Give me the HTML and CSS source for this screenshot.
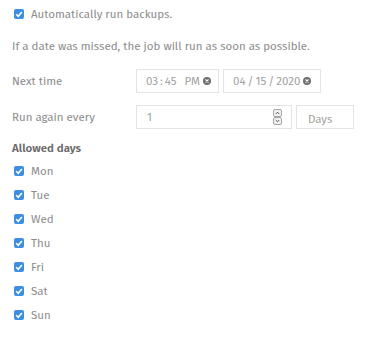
FILE: index.html
```html
<!DOCTYPE html>
<html>
<head>
<meta charset="utf-8">
<link rel="stylesheet" href="styles.css">
</head>
<body>
<div class="page">
  <label class="check top">
    <span class="box"><svg viewBox="0 0 10 10" width="10" height="10"><path d="M2.2 5.2 L4.2 7.2 L7.9 2.9" fill="none" stroke="#fff" stroke-width="1.6"/></svg></span>
    <span>Automatically run backups.</span>
  </label>
  <p class="note">If a date was missed, the job will run as soon as possible.</p>
  <div class="grid">
    <div class="lbl">Next time</div>
    <div class="fields">
      <div class="input time"><span>03</span><span class="sep">:</span><span>45</span><span class="ampm">PM</span>
        <svg class="clear" viewBox="0 0 8 8" width="8" height="8"><circle cx="4" cy="4" r="4" fill="#6e6e6e"/><path d="M2.5 2.5 L5.5 5.5 M5.5 2.5 L2.5 5.5" stroke="#fff" stroke-width="1.1"/></svg></div>
      <div class="input date"><span>04</span><span class="sep2">/</span><span>15</span><span class="sep2">/</span><span>2020</span>
        <svg class="clear" viewBox="0 0 8 8" width="8" height="8"><circle cx="4" cy="4" r="4" fill="#6e6e6e"/><path d="M2.5 2.5 L5.5 5.5 M5.5 2.5 L2.5 5.5" stroke="#fff" stroke-width="1.1"/></svg></div>
    </div>
    <div class="lbl">Run again every</div>
    <div class="fields">
      <div class="input num"><span class="val">1</span>
        <span class="spin"><svg viewBox="0 0 9 16" width="9" height="16"><rect x="0.5" y="0.5" width="8" height="7" rx="1.5" fill="#f2f2f2" stroke="#a5a5a5"/><rect x="0.5" y="8.5" width="8" height="7" rx="1.5" fill="#f2f2f2" stroke="#a5a5a5"/><path d="M2.7 5 L4.5 3.2 L6.3 5" fill="none" stroke="#555" stroke-width="1"/><path d="M2.7 11 L4.5 12.8 L6.3 11" fill="none" stroke="#555" stroke-width="1"/></svg></span>
      </div>
      <div class="input unit"><span>Days</span></div>
    </div>
  </div>
  <div class="days">
    <div class="heading">Allowed days</div>
    <label class="check day"><span class="box"><svg viewBox="0 0 10 10" width="10" height="10"><path d="M2.2 5.2 L4.2 7.2 L7.9 2.9" fill="none" stroke="#fff" stroke-width="1.6"/></svg></span><span>Mon</span></label>
    <label class="check day"><span class="box"><svg viewBox="0 0 10 10" width="10" height="10"><path d="M2.2 5.2 L4.2 7.2 L7.9 2.9" fill="none" stroke="#fff" stroke-width="1.6"/></svg></span><span>Tue</span></label>
    <label class="check day"><span class="box"><svg viewBox="0 0 10 10" width="10" height="10"><path d="M2.2 5.2 L4.2 7.2 L7.9 2.9" fill="none" stroke="#fff" stroke-width="1.6"/></svg></span><span>Wed</span></label>
    <label class="check day"><span class="box"><svg viewBox="0 0 10 10" width="10" height="10"><path d="M2.2 5.2 L4.2 7.2 L7.9 2.9" fill="none" stroke="#fff" stroke-width="1.6"/></svg></span><span>Thu</span></label>
    <label class="check day"><span class="box"><svg viewBox="0 0 10 10" width="10" height="10"><path d="M2.2 5.2 L4.2 7.2 L7.9 2.9" fill="none" stroke="#fff" stroke-width="1.6"/></svg></span><span>Fri</span></label>
    <label class="check day"><span class="box"><svg viewBox="0 0 10 10" width="10" height="10"><path d="M2.2 5.2 L4.2 7.2 L7.9 2.9" fill="none" stroke="#fff" stroke-width="1.6"/></svg></span><span>Sat</span></label>
    <label class="check day"><span class="box"><svg viewBox="0 0 10 10" width="10" height="10"><path d="M2.2 5.2 L4.2 7.2 L7.9 2.9" fill="none" stroke="#fff" stroke-width="1.6"/></svg></span><span>Sun</span></label>
  </div>
</div>
</body>
</html>
```
FILE: styles.css
```css
html, body {
  margin: 0;
  padding: 0;
  background: #fff;
}
body {
  font-family: "Fira Sans", "Noto Sans", "Open Sans", sans-serif;
  font-size: 11.5px;
  font-weight: 400;
  color: #8c8c8c;
}
.page {
  padding: 5px 12px 0 12px;
}
.check {
  display: flex;
  align-items: center;
  gap: 7px;
  height: 18px;
}
.top {
  padding-left: 2px;
}
.box {
  width: 10px;
  height: 10px;
  background: #3d8ee0;
  border-radius: 2px;
  display: inline-flex;
  flex-shrink: 0;
}
.box svg {
  display: block;
}
.note {
  margin: 14px 0 0 0;
  line-height: 18px;
}
.grid {
  display: grid;
  grid-template-columns: 124px auto;
  row-gap: 12px;
  align-items: center;
  margin-top: 14px;
}
.fields {
  display: flex;
  gap: 4px;
}
.input {
  box-sizing: border-box;
  height: 24px;
  border: 1px solid #e4e4e4;
  display: flex;
  align-items: center;
  color: #a2a2a2;
  white-space: nowrap;
}
.time {
  width: 83px;
  padding-left: 9px;
}
.time .sep {
  padding: 0 2px;
}
.time .ampm {
  margin-left: 8px;
}
.clear {
  margin-left: 3px;
  display: block;
  flex-shrink: 0;
}
.date {
  width: 98px;
  padding-left: 9px;
}
.sep2 {
  padding: 0 2px;
}
.num {
  width: 156px;
  padding-left: 10px;
  justify-content: space-between;
  padding-right: 9px;
}
.spin {
  display: flex;
}
.spin svg {
  display: block;
}
.unit {
  width: 58px;
  padding-left: 11px;
  align-items: flex-end;
  padding-bottom: 2px;
}
.days {
  margin-top: 12px;
}
.heading {
  font-weight: 600;
  color: #6a6a6a;
  line-height: 14px;
  margin-bottom: 4px;
}
.day {
  padding-left: 2px;
  height: 24px;
}
```
